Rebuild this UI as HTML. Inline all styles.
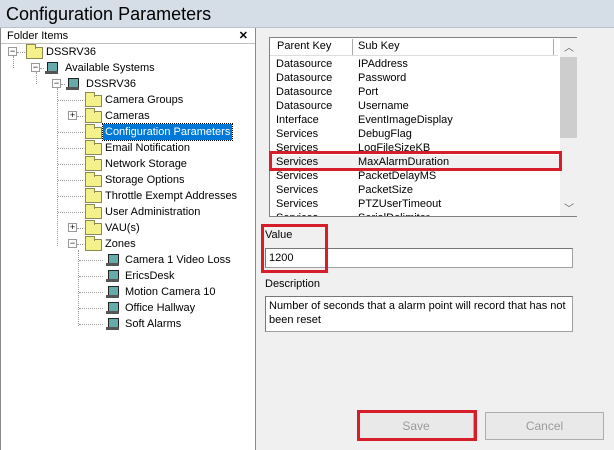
<!DOCTYPE html>
<html><head><style>
*{margin:0;padding:0;box-sizing:border-box}
body{width:614px;height:450px;overflow:hidden;background:#f0f0f0;font-family:"Liberation Sans",sans-serif;font-size:11px;color:#000;position:relative}
.abs{position:absolute}
.title{left:0;top:0;width:614px;height:28px;background:#d5dde7;font-size:18px;padding:4px 0 0 6px;border-bottom:1px solid #b9c3cf}
.left{left:0;top:28px;width:256px;height:422px;background:#fff;border-right:1px solid #8a8a8a;border-left:1px solid #8a8a8a}
.hdr{left:1px;top:28px;width:254px;height:16px;background:#fff;border-bottom:1px solid #c0c0c0;padding:2px 0 0 6px}
.row{position:absolute;height:16px;line-height:16px;white-space:nowrap}
.fold{position:absolute;width:17px;height:12px;background:#f4f18a;border:1px solid #8a8a50}
.fold:before{content:"";position:absolute;left:-1px;top:-4px;width:8px;height:4px;background:#f4f18a;border:1px solid #8a8a50;border-bottom:none}
.exp{position:absolute;width:9px;height:9px;border:1px solid #999;background:#fff;font-size:9px;line-height:7px;text-align:center;color:#000}
.pc{position:absolute;width:12px;height:12px}
.pc:before{content:"";position:absolute;left:2px;top:0;width:9px;height:8px;border:1px solid #222;background:#6aa}
.pc:after{content:"";position:absolute;left:0;top:9px;width:13px;height:3px;background:#555}
.dl{position:absolute;border-top:1px dotted #999;height:0}
.dv{position:absolute;border-left:1px dotted #999;width:0}
.list{left:269px;top:37px;width:308px;height:180px;background:#fff;border:1px solid #828282}
.lh{position:absolute;left:0;top:0;width:288px;height:18px;background:#fff;border-bottom:1px solid #ddd}
.lr{position:absolute;left:6px;height:14px;line-height:14px}
.red{position:absolute;border:3px solid #d41f2b}
.inp{position:absolute;background:#fff;border:1px solid #a0a0a0;border-top-color:#777;border-left-color:#777}
.btn{position:absolute;border:1px solid #adadad;background:#e9e9e9;color:#9a9a9a;text-align:center;line-height:26px;font-size:12px}
</style></head><body>
<div class="abs title">Configuration Parameters</div>
<div class="abs left"></div>
<div class="abs hdr">Folder Items<span style="position:absolute;right:7px;top:1px;font-weight:bold">✕</span></div>

<div class="dv" style="left:13px;top:56px;height:12px"></div>
<div class="dv" style="left:36px;top:72px;height:12px"></div>
<div class="dv" style="left:57px;top:88px;height:158px"></div>
<div class="dv" style="left:78px;top:250px;height:76px"></div>

<div class="exp" style="left:8px;top:47px">−</div><div class="dl" style="left:17px;top:52px;width:8px"></div>
<div class="fold" style="left:26px;top:47px"></div><div class="row" style="left:46px;top:44px">DSSRV36</div>
<div class="exp" style="left:31px;top:63px">−</div><div class="dl" style="left:40px;top:68px;width:4px"></div>
<div class="pc" style="left:45px;top:62px"></div><div class="row" style="left:65px;top:60px">Available Systems</div>
<div class="exp" style="left:52px;top:79px">−</div><div class="dl" style="left:61px;top:84px;width:4px"></div>
<div class="pc" style="left:66px;top:78px"></div><div class="row" style="left:86px;top:76px">DSSRV36</div>

<div class="dl" style="left:58px;top:100px;width:25px"></div><div class="fold" style="left:85px;top:95px"></div><div class="row" style="left:105px;top:92px">Camera Groups</div>
<div class="exp" style="left:68px;top:111px">+</div><div class="dl" style="left:77px;top:116px;width:6px"></div><div class="fold" style="left:85px;top:111px"></div><div class="row" style="left:105px;top:108px">Cameras</div>
<div class="dl" style="left:58px;top:132px;width:25px"></div><div class="fold" style="left:85px;top:127px"></div><div class="row" style="left:103px;top:124px;background:#0078d7;color:#fff;padding:0 2px;outline:1px dotted #000">Configuration Parameters</div>
<div class="dl" style="left:58px;top:148px;width:25px"></div><div class="fold" style="left:85px;top:143px"></div><div class="row" style="left:105px;top:140px">Email Notification</div>
<div class="dl" style="left:58px;top:164px;width:25px"></div><div class="fold" style="left:85px;top:159px"></div><div class="row" style="left:105px;top:156px">Network Storage</div>
<div class="dl" style="left:58px;top:180px;width:25px"></div><div class="fold" style="left:85px;top:175px"></div><div class="row" style="left:105px;top:172px">Storage Options</div>
<div class="dl" style="left:58px;top:196px;width:25px"></div><div class="fold" style="left:85px;top:191px"></div><div class="row" style="left:105px;top:188px">Throttle Exempt Addresses</div>
<div class="dl" style="left:58px;top:212px;width:25px"></div><div class="fold" style="left:85px;top:207px"></div><div class="row" style="left:105px;top:204px">User Administration</div>
<div class="exp" style="left:68px;top:223px">+</div><div class="dl" style="left:77px;top:228px;width:6px"></div><div class="fold" style="left:85px;top:223px"></div><div class="row" style="left:105px;top:220px">VAU(s)</div>
<div class="exp" style="left:68px;top:239px">−</div><div class="dl" style="left:77px;top:244px;width:6px"></div><div class="fold" style="left:85px;top:239px"></div><div class="row" style="left:105px;top:236px">Zones</div>

<div class="dl" style="left:79px;top:260px;width:24px"></div><div class="pc" style="left:106px;top:254px"></div><div class="row" style="left:125px;top:252px">Camera 1 Video Loss</div>
<div class="dl" style="left:79px;top:276px;width:24px"></div><div class="pc" style="left:106px;top:270px"></div><div class="row" style="left:125px;top:268px">EricsDesk</div>
<div class="dl" style="left:79px;top:292px;width:24px"></div><div class="pc" style="left:106px;top:286px"></div><div class="row" style="left:125px;top:284px">Motion Camera 10</div>
<div class="dl" style="left:79px;top:308px;width:24px"></div><div class="pc" style="left:106px;top:302px"></div><div class="row" style="left:125px;top:300px">Office Hallway</div>
<div class="dl" style="left:79px;top:324px;width:24px"></div><div class="pc" style="left:106px;top:318px"></div><div class="row" style="left:125px;top:316px">Soft Alarms</div>

<div class="abs list">
 <div class="lh"><span style="position:absolute;left:7px;top:2px">Parent Key</span><div style="position:absolute;left:82px;top:1px;height:16px;border-left:1px solid #aaa"></div><span style="position:absolute;left:88px;top:2px">Sub Key</span><div style="position:absolute;left:283px;top:1px;height:16px;border-left:1px solid #aaa"></div></div>
 <div style="position:absolute;left:290px;top:0;width:17px;height:178px;background:#f0f0f0"><div style="position:absolute;left:0;top:19px;width:17px;height:81px;background:#cdcdcd"></div><span style="position:absolute;left:4px;top:1px;color:#606060;font-size:10px">︿</span><span style="position:absolute;left:4px;top:162px;color:#606060;font-size:10px">﹀</span></div>
 <div style="position:absolute;left:0;top:19px;width:290px;height:159px;overflow:hidden">
 <div class="lr" style="top:0">Datasource</div><div class="lr" style="top:0;left:88px">IPAddress</div>
 <div class="lr" style="top:14px">Datasource</div><div class="lr" style="top:14px;left:88px">Password</div>
 <div class="lr" style="top:28px">Datasource</div><div class="lr" style="top:28px;left:88px">Port</div>
 <div class="lr" style="top:42px">Datasource</div><div class="lr" style="top:42px;left:88px">Username</div>
 <div class="lr" style="top:56px">Interface</div><div class="lr" style="top:56px;left:88px">EventImageDisplay</div>
 <div class="lr" style="top:70px">Services</div><div class="lr" style="top:70px;left:88px">DebugFlag</div>
 <div class="lr" style="top:84px">Services</div><div class="lr" style="top:84px;left:88px">LogFileSizeKB</div>
 <div style="position:absolute;left:0;top:98px;width:290px;height:14px;background:#f0f0f0"></div>
 <div class="lr" style="top:98px">Services</div><div class="lr" style="top:98px;left:88px">MaxAlarmDuration</div>
 <div class="lr" style="top:112px">Services</div><div class="lr" style="top:112px;left:88px">PacketDelayMS</div>
 <div class="lr" style="top:126px">Services</div><div class="lr" style="top:126px;left:88px">PacketSize</div>
 <div class="lr" style="top:140px">Services</div><div class="lr" style="top:140px;left:88px">PTZUserTimeout</div>
 <div class="lr" style="top:154px">Services</div><div class="lr" style="top:154px;left:88px">SerialDelimiter</div>
 </div>
</div>
<div class="red" style="left:269px;top:151px;width:293px;height:20px"></div>

<div class="row" style="left:265px;top:227px">Value</div>
<div class="inp" style="left:265px;top:248px;width:308px;height:20px;padding:3px 0 0 3px">1200</div>
<div class="red" style="left:261px;top:224px;width:67px;height:49px"></div>
<div class="row" style="left:265px;top:276px">Description</div>
<div class="inp" style="left:265px;top:296px;width:308px;height:36px;padding:2px 0 0 3px;line-height:14px">Number of seconds that a alarm point will record that has not been reset</div>

<div class="btn" style="left:358px;top:412px;width:116px;height:28px">Save</div>
<div class="red" style="left:357px;top:410px;width:120px;height:31px"></div>
<div class="btn" style="left:485px;top:412px;width:119px;height:28px">Cancel</div>
</body></html>
